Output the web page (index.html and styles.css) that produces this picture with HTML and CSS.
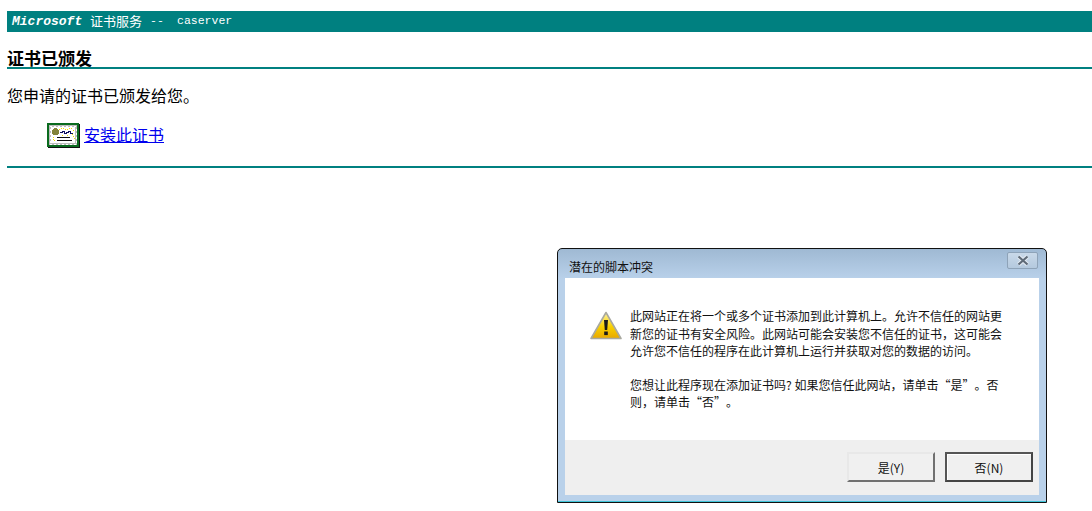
FILE: index.html
```html
<!DOCTYPE html>
<html lang="zh-CN">
<head>
<meta charset="utf-8">
<title>Microsoft 证书服务</title>
<link rel="stylesheet" href="styles.css">
</head>
<body>
<div class="banner"><span class="ms">Microsoft</span><span class="svc">证书服务</span><span class="sep">--</span><span class="ca">caserver</span></div>
<h1 class="title">证书已颁发</h1>
<p class="msg">您申请的证书已颁发给您。</p>
<div class="install">
  <svg class="cert" width="33" height="25" viewBox="0 0 33 25" shape-rendering="crispEdges">
    <rect x="0" y="0" width="32" height="24" fill="#0a6b1e"/>
    <rect x="1" y="24" width="32" height="1" fill="#111"/>
    <rect x="32" y="1" width="1" height="24" fill="#111"/>
    <rect x="2" y="2" width="28" height="20" fill="#bdbdbd"/>
    <rect x="4" y="4" width="24" height="16" fill="#fff"/>
    <path d="M3 3h2M7 3h2M11 3h2M15 3h2M19 3h2M23 3h2M27 3h2M3 21h2M7 21h2M11 21h2M15 21h2M19 21h2M23 21h2M27 21h2M3 6v2M3 10v2M3 14v2M3 18v2M29 6v2M29 10v2M29 14v2M29 18v2" stroke="#fff" fill="none"/>
    <circle cx="8.500" cy="8.500" r="3.500" fill="#84843a"/>
    <path d="M13 9h2v-1h2v2h2v-1h2v-1h2v2h3" stroke="#101060" fill="none"/>
    <path d="M10 14h13M10 17h15" stroke="#101010" fill="none"/>
    <path d="M14 5h1M18 6h1M22 5h1M26 7h1M25 11h1M6 14h1M7 17h1M27 15h1M15 12h1M20 12h1M12 6h1M16 5h1M20 6h1M24 5h1M26 13h1M6 16h1" stroke="#f2e000" fill="none"/>
  </svg>
  <a class="link" href="#">安装此证书</a>
</div>
<hr class="rule">

<div class="dialog">
  <div class="dlg-title">
    <span class="dlg-name">潜在的脚本冲突</span>
    <span class="close">
      <svg width="16" height="11" viewBox="0 0 16 11">
        <path d="M3.500 1.500L12.500 9.500M12.500 1.500L3.500 9.500" stroke="#e4ebf3" stroke-width="4.200" fill="none"/>
        <path d="M3.500 1.500L12.500 9.500M12.500 1.500L3.500 9.500" stroke="#5f6b78" stroke-width="2.200" fill="none"/>
      </svg>
    </span>
  </div>
  <div class="dlg-body">
    <div class="dlg-content">
      <svg class="warn" width="32" height="29" viewBox="0 0 32 29">
        <defs>
          <linearGradient id="w" x1="0" y1="0" x2="0" y2="1">
            <stop offset="0" stop-color="#fff3a0"/>
            <stop offset=".55" stop-color="#f8d000"/>
            <stop offset="1" stop-color="#e8a800"/>
          </linearGradient>
        </defs>
        <path d="M16 1.500L31 27.500H1Z" fill="url(#w)" stroke="#a9a9a0" stroke-width="1.600" stroke-linejoin="round"/>
        <path d="M14 9h4l-.8 10h-2.400Z" fill="#1a1a1a"/>
        <rect x="14.200" y="20.500" width="3.600" height="3.600" fill="#1a1a1a"/>
      </svg>
      <div class="dlg-text">
        <p class="para">此网站正在将一个或多个证书添加到此计算机上。允许不信任的网站更<br>新您的证书有安全风险。此网站可能会安装您不信任的证书，这可能会<br>允许您不信任的程序在此计算机上运行并获取对您的数据的访问。</p>
        <p class="para">您想让此程序现在添加证书吗? 如果您信任此网站，请单击<span class="ql">“</span>是<span class="qr">”</span>。否<br>则，请单击<span class="ql">“</span>否<span class="qr">”</span>。</p>
      </div>
    </div>
    <div class="dlg-actions">
      <span class="btn">是(Y)</span>
      <span class="btn btn-default">否(N)</span>
    </div>
  </div>
</div>
</body>
</html>
```
FILE: styles.css
```css
html, body {
  margin: 0;
  padding: 0;
}
body {
  height: 511px;
  overflow: hidden;
  background: #fff;
  color: #000;
  font-family: "Noto Sans CJK SC", "Liberation Sans", sans-serif;
  position: relative;
  padding: 11px 0 0 7px;
  box-sizing: border-box;
}
.banner {
  height: 21px;
  box-sizing: border-box;
  padding: 0 0 2px 5px;
  background: #008080;
  color: #fff;
  display: flex;
  align-items: center;
  font-size: 13px;
}
.ms {
  font-family: "Liberation Mono", monospace;
  font-style: italic;
  font-weight: bold;
  font-size: 13px;
  width: 78px;
  margin-top: 2px;
}
.svc { width: 60px; }
.sep { font-family: "Liberation Mono", monospace; width: 27px; font-size: 11.500px; }
.ca { font-family: "Liberation Mono", monospace; font-size: 11.500px; }
.title {
  margin: 16px 0 0;
  height: 19px;
  font-size: 17px;
  line-height: 20px;
  font-weight: bold;
  border-bottom: 2px solid #008080;
}
.msg {
  margin: 15px 0 0;
  font-size: 16px;
  line-height: 22px;
  height: 22px;
}
.install {
  display: flex;
  align-items: center;
  gap: 4px;
  margin: 17px 0 0 40px;
  height: 25px;
}
.cert { display: block; flex: none; }
.link {
  color: #0000ee;
  font-size: 16px;
  line-height: 20px;
  margin-bottom: 4px;
  text-decoration: underline;
}
.rule {
  margin: 18px 0 0;
  height: 2px;
  border: 0;
  background: #008080;
}
.dialog {
  position: absolute;
  left: 557px;
  top: 248px;
  width: 490px;
  height: 255px;
  box-sizing: border-box;
  border: 1px solid #111;
  border-radius: 5px 5px 0 0;
  background: linear-gradient(#9fb9d3 0, #b9d1ea 30px, #b9d1ea 100%);
  box-shadow: inset 0 -1px 0 #3fc4d8;
  padding: 0 7px 7px;
  display: flex;
  flex-direction: column;
}
.dlg-title {
  height: 29px;
  flex: none;
  display: flex;
  align-items: center;
  justify-content: space-between;
  font-size: 12px;
  color: #111;
}
.dlg-name { margin: 6px 0 0 4px; }
.close {
  width: 29px;
  height: 15px;
  margin: 0 1px 6px 0;
  border: 1px solid #8ea3b8;
  border-radius: 2px;
  background: linear-gradient(#c9d9e9, #b4c9de);
  display: flex;
  align-items: center;
  justify-content: center;
}
.close svg { display: block; }
.dlg-body {
  flex: 1;
  display: flex;
  flex-direction: column;
  background: #fff;
}
.dlg-content {
  flex: 1;
  display: flex;
  padding: 29px 0 0 25px;
  box-sizing: border-box;
}
.warn { flex: none; display: block; margin-top: 4px; margin-right: 8px; }
.dlg-text { font-size: 12px; line-height: 17.500px; color: #111; }
.para { margin: 0 0 16px; white-space: nowrap; }
.ql, .qr { display: inline-block; width: 12px; }
.ql { text-align: right; }
.qr { text-align: left; }
.dlg-actions {
  flex: none;
  height: 55px;
  box-sizing: border-box;
  background: #efefef;
  display: flex;
  justify-content: flex-end;
  gap: 10px;
  padding: 12px 6px 0 0;
}
.btn {
  width: 88px;
  height: 30px;
  box-sizing: border-box;
  border: 2px solid;
  border-color: #e8e8e8 #707070 #707070 #e8e8e8;
  background: #f0f0f0;
  font-size: 12px;
  color: #111;
  display: flex;
  align-items: center;
  justify-content: center;
}
.btn-default {
  border-color: #555 #444 #444 #555;
  box-shadow: inset 1px 1px 0 #fff;
}
```
